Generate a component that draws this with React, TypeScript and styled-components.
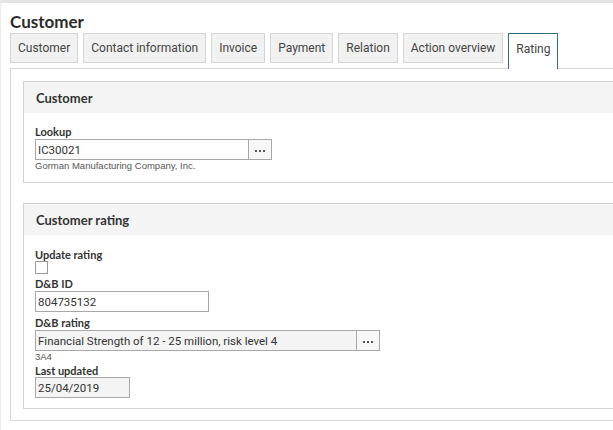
import React from "react";
import styled, { createGlobalStyle } from "styled-components";

const Global = createGlobalStyle`
  html, body { margin: 0; padding: 0; background: #fff; }
  body { overflow: hidden; font-family: Roboto, "Liberation Sans", Arial, sans-serif; color: #333; }
`;

const Page = styled.div`
  width: 613px;
  height: 430px;
  box-sizing: border-box;
  border-top: 3px solid #e4e4e4;
  border-left: 1px solid #ececec;
  padding-left: 9px;
  overflow: hidden;
`;

const Title = styled.h1`
  margin: 0;
  padding-top: 8px;
  height: 22px;
  font-family: Lato, "Liberation Sans", sans-serif;
  font-weight: 700;
  font-size: 17px;
  line-height: 22px;
  color: #2b2b2b;
`;

const TabRow = styled.div`
  display: flex;
  align-items: flex-start;
  gap: 5px;
  position: relative;
  z-index: 1;
`;

const Tab = styled.div<{ $active?: boolean }>`
  box-sizing: border-box;
  height: ${(p) => (p.$active ? "36px" : "30px")};
  padding: 0 7px;
  display: flex;
  align-items: center;
  font-family: Roboto, "Liberation Sans", sans-serif;
  font-size: 12px;
  color: #444;
  background: ${(p) => (p.$active ? "#fff" : "#f1f1f1")};
  border: 1px solid ${(p) => (p.$active ? "#2f6f80" : "#d5d5d5")};
  border-bottom: ${(p) => (p.$active ? "none" : "1px solid #d5d5d5")};
  padding-bottom: ${(p) => (p.$active ? "6px" : "0")};
  margin-bottom: ${(p) => (p.$active ? "-1px" : "0")};
`;

const Panel = styled.div`
  margin-right: -30px;
  border: 1px solid #d8d8d8;
  padding: 12px 0 11px 12px;
  display: flex;
  flex-direction: column;
  gap: 20px;
`;

const Section = styled.section`
  border: 1px solid #d3d3d3;
`;

const SectionHeader = styled.div`
  height: 31px;
  background: #f4f4f4;
  padding-left: 12px;
  display: flex;
  align-items: center;
  font-family: Lato, "Liberation Sans", sans-serif;
  font-weight: 700;
  font-size: 13px;
  color: #333;
`;

const SectionBody = styled.div<{ $top: number; $bottom: number }>`
  padding: ${(p) => p.$top}px 12px ${(p) => p.$bottom}px 11px;
  display: flex;
  flex-direction: column;
  align-items: flex-start;
`;

const Label = styled.div<{ $gap?: number; $lh?: number }>`
  margin-top: ${(p) => p.$gap ?? 0}px;
  font-family: Lato, "Liberation Sans", sans-serif;
  font-weight: 700;
  font-size: 11px;
  line-height: ${(p) => p.$lh ?? 14}px;
  color: #333;
`;

const InputGroup = styled.div`
  display: flex;
`;

const Input = styled.div<{ $w: number; $readOnly?: boolean }>`
  box-sizing: border-box;
  width: ${(p) => p.$w}px;
  height: 21px;
  border: 1px solid #a8a8a8;
  background: ${(p) => (p.$readOnly ? "#f4f4f4" : "#fff")};
  padding-left: 2px;
  display: flex;
  align-items: center;
  font-family: Roboto, "Liberation Sans", sans-serif;
  font-size: 11.5px;
  color: #333;
  white-space: nowrap;
`;

const DotsButton = styled.div`
  box-sizing: border-box;
  width: 23px;
  height: 21px;
  border: 1px solid #a8a8a8;
  border-left: none;
  background: #f7f7f7;
  display: flex;
  align-items: center;
  justify-content: center;
  gap: 2px;
  padding-top: 3px;
`;

const Dot = styled.span`
  width: 2px;
  height: 2px;
  background: #555;
`;

const Hint = styled.div<{ $lh: number }>`
  font-family: "Liberation Sans", Arial, sans-serif;
  font-size: 9.5px;
  line-height: ${(p) => p.$lh}px;
  color: #555;
`;

const Checkbox = styled.div`
  box-sizing: border-box;
  width: 13px;
  height: 13px;
  border: 1px solid #9a9a9a;
  background: #fff;
`;

const Dots = () => (
  <DotsButton>
    <Dot />
    <Dot />
    <Dot />
  </DotsButton>
);

const tabs = ["Customer", "Contact information", "Invoice", "Payment", "Relation", "Action overview", "Rating"];

export default function App() {
  return (
    <>
      <Global />
      <Page>
        <Title>Customer</Title>
        <TabRow>
          {tabs.map((t) => (
            <Tab key={t} $active={t === "Rating"}>
              {t}
            </Tab>
          ))}
        </TabRow>
        <Panel>
          <Section>
            <SectionHeader>Customer</SectionHeader>
            <SectionBody $top={12} $bottom={10}>
              <Label>Lookup</Label>
              <InputGroup>
                <Input $w={214}>IC30021</Input>
                <Dots />
              </InputGroup>
              <Hint $lh={12}>Gorman Manufacturing Company, Inc.</Hint>
            </SectionBody>
          </Section>
          <Section>
            <SectionHeader>Customer rating</SectionHeader>
            <SectionBody $top={13} $bottom={10}>
              <Label $lh={13}>Update rating</Label>
              <Checkbox />
              <Label $gap={3}>D&amp;B ID</Label>
              <Input $w={174}>804735132</Input>
              <Label $gap={4}>D&amp;B rating</Label>
              <InputGroup>
                <Input $w={322} $readOnly>
                  Financial Strength of 12 - 25 million, risk level 4
                </Input>
                <Dots />
              </InputGroup>
              <Hint $lh={11}>3A4</Hint>
              <Label $gap={2} $lh={13}>Last updated</Label>
              <Input $w={95} $readOnly>
                25/04/2019
              </Input>
            </SectionBody>
          </Section>
        </Panel>
      </Page>
    </>
  );
}
